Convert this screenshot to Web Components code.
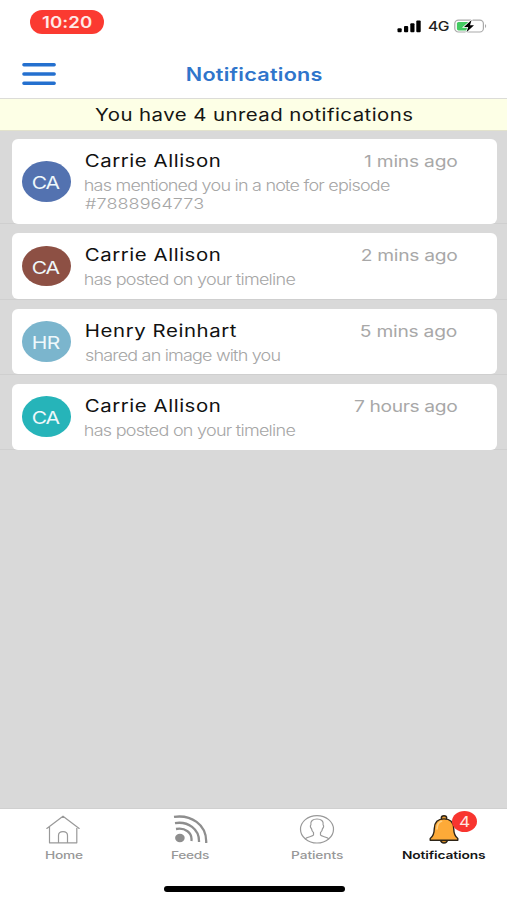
<!DOCTYPE html>
<html lang="en">
<head>
<meta charset="utf-8">
<title>Notifications</title>
<style>
html,body{margin:0;padding:0;background:#fff}
body{font-family:Inter,"Liberation Sans",sans-serif}
</style>
</head>
<body>
<notifications-app></notifications-app>
<script>
const define = (name, html, setup) => customElements.define(name, class extends HTMLElement {
  connectedCallback() {
    if (this.shadowRoot) return;
    const root = this.attachShadow({ mode: 'open' });
    root.innerHTML = typeof html === 'function' ? html(this) : html;
    if (setup) setup(this, root);
  }
});

/* Wide label: glyphs stretched horizontally, tracking computed so the ink fills the given width. */
const pen = document.createElement('canvas').getContext('2d');
define('wide-label', el => `
<style>
:host{display:block;flex:none;width:${el.getAttribute('w')}px;height:1.2em;line-height:1.2}
span{display:block;width:max-content;white-space:pre;transform-origin:0 50%;font-kerning:normal}
</style><span>${el.getAttribute('text')}</span>`, (el, root) => {
  const span = root.querySelector('span');
  const text = el.getAttribute('text');
  const stretch = +(el.getAttribute('stretch') || 1.2);
  const cs = getComputedStyle(span);
  pen.font = `${cs.fontWeight} ${cs.fontSize} ${cs.fontFamily}`;
  const m = pen.measureText(text);
  const ink = m.actualBoundingBoxRight + m.actualBoundingBoxLeft;
  const gap = text.length > 1 ? (el.getAttribute('w') / stretch - ink) / (text.length - 1) : 0;
  span.style.letterSpacing = gap + 'px';
  span.style.transform = `translateX(${m.actualBoundingBoxLeft * stretch}px) scaleX(${stretch})`;
});

define('status-bar', `
<style>
:host{display:flex;height:49px;padding:0 19px 0 30px;justify-content:space-between;box-sizing:border-box}
.time{display:flex;align-items:center;justify-content:center;width:74px;height:24px;margin-top:10px;border-radius:12px;background:#fb3a31;color:#ffe9e6;font-size:15.5px;font-weight:600;box-sizing:border-box;padding-top:2px}
.right{display:flex;align-items:flex-start;padding-top:18px;color:#222;font-size:13px;font-weight:500}
.right wide-label{margin:1px 6px 0 7px}
svg{display:block}
.sig{margin-top:2px}
</style>
<div class="time"><wide-label text="10:20" w="50"></wide-label></div>
<div class="right">
<svg class="sig" width="24" height="13" viewBox="0 0 24 13" fill="#000"><rect x=".5" y="8.3" width="4.2" height="4" rx="1"/><rect x="7" y="6" width="4.2" height="6.3" rx="1"/><rect x="13.3" y="3.3" width="4.2" height="9" rx="1"/><rect x="19.3" y=".4" width="4.4" height="11.9" rx="1"/></svg>
<wide-label text="4G" w="20.5"></wide-label>
<svg width="34" height="16" viewBox="0 0 34 16"><rect x=".8" y="2.2" width="28.6" height="11.8" rx="3.6" fill="#fff" stroke="#a9a9a9" stroke-width="1.2"/><path d="M31 6q2.4 2 0 4.2z" fill="#aaa"/><path d="M4.5 4H14v8.4H4.5q-1.6 0-1.6-1.6V5.6Q2.9 4 4.500 4Z" fill="#43ca61"/><path d="M17.600 2 10 9h4.200l-1.700 5.200L20 7.300h-4z" fill="#000" stroke="#fff" stroke-width="1.600" paint-order="stroke"/></svg>
</div>`);

define('nav-bar', `
<style>
:host{display:grid;grid-template-columns:34px 1fr 34px;align-items:center;height:50px;padding:0 22px;box-sizing:border-box;border-bottom:1px solid #dcdcd8;color:#2f75cb;font-size:18px;font-weight:600}
svg{display:block}
wide-label{justify-self:center;margin:2px 0 0 2px}
</style>
<svg width="34" height="24" viewBox="0 0 34 24" stroke="#2470cf" stroke-width="3.4" stroke-linecap="round"><path d="M1.900 2.800H32.200M1.900 12H32.200M1.900 21.300H32.200"/></svg>
<wide-label text="Notifications" w="135.500"></wide-label>`);

define('unread-banner', `
<style>
:host{display:flex;justify-content:center;align-items:center;height:32px;box-sizing:border-box;padding-top:2px;background:#fdffe6;border-bottom:1px solid #e2e2cc;color:#161613;font-size:17px}
</style>
<wide-label text="You have 4 unread notifications" w="318"></wide-label>`);

define('user-avatar', `
<style>
:host{display:flex;flex:none;align-items:center;justify-content:center;width:49px;height:40.500px;box-sizing:border-box;padding-top:2px;border-radius:50%;color:#eef8fb;font-size:17.500px}
</style><slot></slot>`);

define('notification-row', el => {
  const a = n => el.getAttribute(n);
  const lines = a('lines').split('|').map(l => {
    const [text, w] = l.split('~');
    return `<wide-label text="${text}" w="${w}"></wide-label>`;
  }).join('');
  return `
<style>
:host{display:flex;box-sizing:border-box;height:${a('h')}px;padding:${a('top') || 9}px 10.500px 0 11.500px;border-bottom:1px solid #cfcfcf}
.card{display:flex;align-items:center;flex:1;margin-bottom:-.5px;background:#fff;border-radius:6px;padding:0 39px 0 10.500px}
.body{flex:1;align-self:flex-start;padding:12px 0 0 14px}
.head{display:flex;justify-content:space-between;align-items:baseline;height:20px;color:#111;font-size:17px}
.head wide-label:first-child{margin-left:.6px}
.when{font-size:16px;color:#a8a8a8;position:relative;left:-.8px}
.desc{padding-top:6.300px;color:#a6a6a6;font-size:15px;font-weight:300}
.desc wide-label{height:18px;line-height:18px}
</style>
<div class="card">
<user-avatar style="background:${a('color')}"><wide-label text="${a('initials')}" w="27"></wide-label></user-avatar>
<div class="body">
<div class="head"><wide-label text="${a('name')}" w="${a('namew')}"></wide-label><wide-label class="when" text="${a('when')}" w="${a('whenw')}"></wide-label></div>
<div class="desc">${lines}</div>
</div></div>`;
});

define('tab-item', el => `
<style>
:host{display:flex;flex-direction:column;align-items:center;position:relative;padding-top:5px;color:#989898;font-size:11px;font-weight:${el.hasAttribute('active') ? 600 : 500}}
:host([active]){color:#151515}
wide-label{margin-top:4px}
</style><slot></slot><wide-label text="${el.getAttribute('label')}" w="${el.getAttribute('w')}" stretch="1.25"></wide-label>`);

define('count-badge', `
<style>
:host{position:absolute;left:71.500px;top:2px;width:25px;height:21px;border-radius:50%;background:#f8352f;color:#ffe5e0;display:flex;align-items:center;justify-content:center;font-size:14.500px;font-weight:400}
</style><slot></slot>`);

define('tab-bar', `
<style>
:host{display:flex;flex-direction:column;height:92px;background:#fff;border-top:1px solid #d0d0d0;box-sizing:border-box}
.tabs{display:grid;grid-template-columns:repeat(4,1fr);height:79px}
svg{display:block}
.bar{width:181px;height:6px;border-radius:3px;background:#000;margin:-2.500px auto 0;position:relative;left:.5px}
</style>
<div class="tabs">
<tab-item label="Home" w="37.500"><svg width="36" height="31" viewBox="0 0 36 31" fill="none" stroke="#999" stroke-width="1.200" stroke-linejoin="round" stroke-linecap="round"><path d="M1.800 14.400 18 2.200 34.200 14.400M4.500 12.500V28.800H31.800V12.500M13.500 28.500V21.500Q13.500 17.600 18 17.600T22.500 21.500V28.500"/></svg></tab-item>
<tab-item label="Feeds" w="38.500"><svg width="36" height="31" viewBox="0 0 36 31" fill="none" stroke="#8e8e8e" stroke-width="2.300" stroke-linecap="butt"><path d="M2 2.900C18.500.5 35 10 34.200 29M3 9.100C16 7 27.500 15 27 28M4 15C13 13.400 20.600 18.500 19.400 27"/><ellipse cx="7.900" cy="24" rx="4.800" ry="4.200" fill="#8e8e8e" stroke="none"/></svg></tab-item>
<tab-item label="Patients" w="52.500"><svg width="36" height="31" viewBox="0 0 36 31" fill="none" stroke="#999" stroke-width="1.200" stroke-linejoin="round"><ellipse cx="18" cy="15.300" rx="16.500" ry="13.700"/><path d="M6.200 24.800C8 22.800 13.800 22.600 14.500 21V18.600C13 17.600 12.600 15.500 12.400 14.400 11.300 14 11 11.300 11.900 11 11 6.900 14 5 18 5S25 6.900 24.100 11C25 11.300 24.700 14 23.600 14.400 23.400 15.500 23 17.600 21.500 18.600V21C22.200 22.600 28 22.800 29.800 24.800"/></svg></tab-item>
<tab-item label="Notifications" w="83.500" active><svg width="36" height="31" viewBox="0 0 36 31"><ellipse cx="18" cy="4" rx="2.700" ry="2.300" fill="#ee9e31" stroke="#2d2417" stroke-width="1.400"/><path d="M14.300 25.500Q15 29 18 29T21.700 25.500Z" fill="#d88b22" stroke="#2d2417" stroke-width="1.400"/><path d="M18 4.900C11.500 4.900 8.500 9 8.300 14.500 8.200 20 7 22.500 4.200 24.500V26.300H31.800V24.500C29 22.500 27.800 20 27.700 14.500 27.500 9 24.500 4.900 18 4.900Z" fill="#fdaa38" stroke="#2d2417" stroke-width="1.400" stroke-linejoin="round"/><path d="M11 15C11.200 10.500 12.800 8 15.500 7.300" fill="none" stroke="#ffd083" stroke-width="1.600" stroke-linecap="round"/></svg><count-badge><wide-label text="4" w="10"></wide-label></count-badge></tab-item>
</div>
<div class="bar"></div>`);

define('notifications-app', `
<style>
:host{display:flex;flex-direction:column;width:507px;height:900px;background:#fff;overflow:hidden}
main{flex:1;background:#d9d9d9;min-height:0}
</style>
<status-bar></status-bar>
<nav-bar></nav-bar>
<unread-banner></unread-banner>
<main>
<notification-row h="93" top="8" color="#5372b0" initials="CA" name="Carrie Allison" namew="133.500" when="1 mins ago" whenw="93" lines="has mentioned you in a note for episode~304.500|#7888964773~119"></notification-row>
<notification-row h="75.500" color="#8d5044" initials="CA" name="Carrie Allison" namew="133.500" when="2 mins ago" whenw="95" lines="has posted on your timeline~210"></notification-row>
<notification-row h="75.300" color="#7bb5cd" initials="HR" name="Henry Reinhart" namew="151" when="5 mins ago" whenw="95.500" lines="shared an image with you~195"></notification-row>
<notification-row h="75.300" color="#26b4b9" initials="CA" name="Carrie Allison" namew="133.500" when="7 hours ago" whenw="103" lines="has posted on your timeline~210"></notification-row>
</main>
<tab-bar></tab-bar>`);
</script>
</body>
</html>
